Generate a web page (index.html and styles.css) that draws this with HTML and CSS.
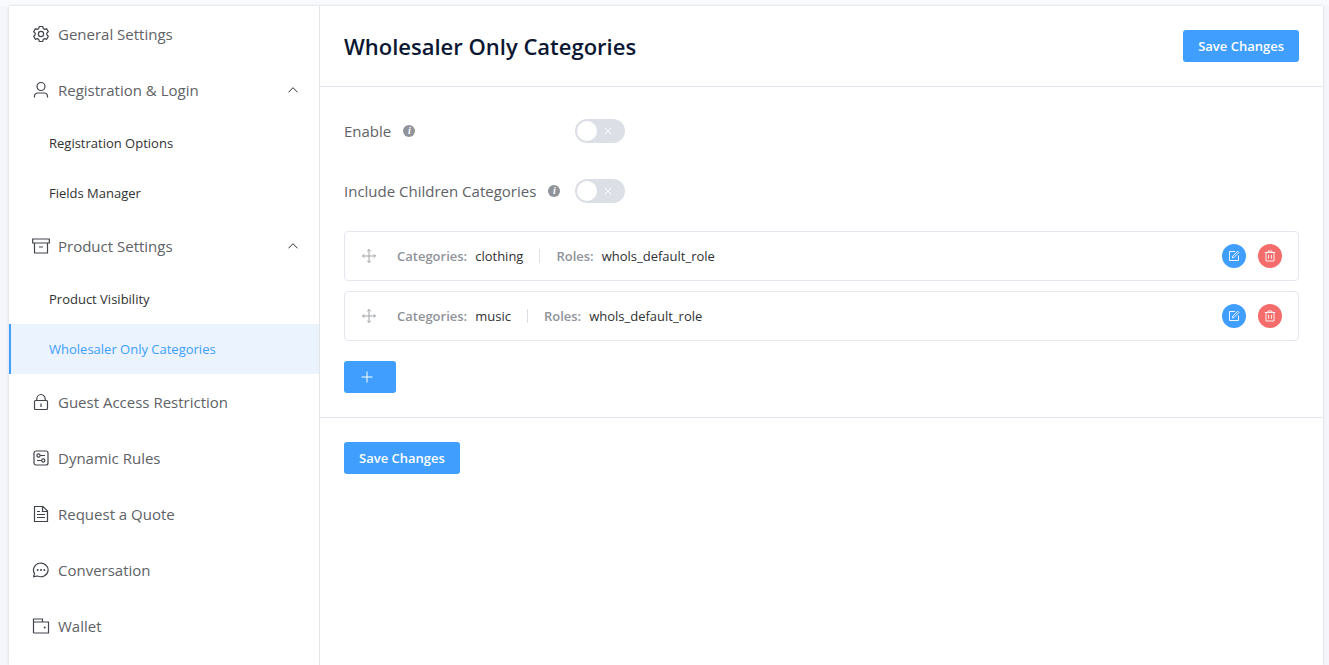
FILE: index.html
```
<!DOCTYPE html>
<html lang="en">
<head>
<meta charset="utf-8">
<title>Wholesaler Only Categories</title>
<meta name="viewport" content="width=device-width, initial-scale=1">
<link rel="stylesheet" href="styles.css">
</head>
<body>
<svg class="sprite" aria-hidden="true">
  <symbol id="i-gear" viewBox="0 0 18 18"><path d="M7.3 1.5h3.4l.6 2.1 1.2.7 2.1-.5 1.7 2.9-1.5 1.6v1.4l1.5 1.6-1.7 2.9-2.1-.5-1.2.7-.6 2.1H7.3l-.6-2.1-1.2-.7-2.1.5-1.7-2.9 1.5-1.6V8.300L1.700 6.700l1.700-2.900 2.100.5 1.200-.7z"/><circle cx="9" cy="9" r="2.600"/></symbol>
  <symbol id="i-user" viewBox="0 0 18 18"><circle cx="9" cy="5.500" r="4"/><path d="M2.500 16.500v-1.500a3 3 0 0 1 3-3h7a3 3 0 0 1 3 3v1.500"/></symbol>
  <symbol id="i-box" viewBox="0 0 18 18"><path d="M.7 2h16.600v4H.7zM2.500 6v10h13V6M7 10h4"/></symbol>
  <symbol id="i-lock" viewBox="0 0 18 18"><rect x="2.500" y="7.500" width="13" height="9" rx="1"/><path d="M4.800 7.500V6a4.200 4.500 0 0 1 8.400 0v1.500M9 10.500v3.500"/></symbol>
  <symbol id="i-rules" viewBox="0 0 18 18"><rect x="2" y="2" width="14" height="14" rx="2"/><circle cx="6.500" cy="6.500" r="1.600"/><path d="M8.100 6.500H13M5 11.500h4.500"/><circle cx="11.300" cy="11.500" r="1.600"/></symbol>
  <symbol id="i-doc" viewBox="0 0 18 18"><path d="M2.500 1.500h8.500l4.500 4.500v10.500h-13zM10.500 1.500V6.500h5M5 6.500h3M5 9.500h8M5 12.500h8"/></symbol>
  <symbol id="i-chat" viewBox="0 0 18 18"><path d="M1.700 15.700l.8-3.300A7.300 6.800 0 1 1 5.500 15z"/><path class="dots" d="M5.700 9h.01M9 9h.01M12.300 9h.01"/></symbol>
  <symbol id="i-wallet" viewBox="0 0 18 18"><path d="M1.500 16V2H10.500v3M1.500 5.000h15V16h-15"/><path class="dots" d="M12.700 10.500h.01"/></symbol>
  <symbol id="i-up" viewBox="0 0 12 12"><path d="M1.500 8.300 6 3.700l4.500 4.600"/></symbol>
  <symbol id="i-x" viewBox="0 0 12 12"><path d="M2.500 2.500l7 7M9.500 2.500l-7 7"/></symbol>
  <symbol id="i-plus" viewBox="0 0 14 14"><path d="M7 1.500v11M1.500 7h11"/></symbol>
  <symbol id="i-move" viewBox="0 0 16 16"><path d="M8 1.500v13M1.500 8h13M6.200 3.300 8 1.500l1.800 1.800M6.200 12.700 8 14.500l1.800-1.800M3.300 6.200 1.500 8l1.800 1.800M12.700 6.200 14.500 8l-1.800 1.800"/></symbol>
  <symbol id="i-edit" viewBox="0 0 12 12"><path d="M7 1.500H1.500v9h9V5.500"/><path d="M4.300 7.900l.3-1.600L9.600 1.200l1.300 1.300L5.900 7.500z"/></symbol>
  <symbol id="i-trash" viewBox="0 0 12 12"><path d="M.8 2.500h10.400M4 2.500V1h4v1.500M2 2.500v8.500h8V2.500M4.600 4.800v4M7.400 4.800v4"/></symbol>
</svg>

<div class="panel">
  <nav class="sidebar" aria-label="Settings">
    <ul class="menu">
      <li><a class="item" href="#general"><svg class="icon"><use href="#i-gear"/></svg>General Settings</a></li>
      <li>
        <button class="item" type="button" aria-expanded="true"><svg class="icon"><use href="#i-user"/></svg>Registration &amp; Login<svg class="arrow"><use href="#i-up"/></svg></button>
        <ul class="menu">
          <li><a class="sub" href="#options">Registration Options</a></li>
          <li><a class="sub" href="#fields">Fields Manager</a></li>
        </ul>
      </li>
      <li>
        <button class="item" type="button" aria-expanded="true"><svg class="icon"><use href="#i-box"/></svg>Product Settings<svg class="arrow"><use href="#i-up"/></svg></button>
        <ul class="menu">
          <li><a class="sub" href="#visibility">Product Visibility</a></li>
          <li><a class="sub active" href="#categories" aria-current="page">Wholesaler Only Categories</a></li>
        </ul>
      </li>
      <li><a class="item" href="#guest"><svg class="icon"><use href="#i-lock"/></svg>Guest Access Restriction</a></li>
      <li><a class="item" href="#rules"><svg class="icon"><use href="#i-rules"/></svg>Dynamic Rules</a></li>
      <li><a class="item" href="#quote"><svg class="icon"><use href="#i-doc"/></svg>Request a Quote</a></li>
      <li><a class="item" href="#conversation"><svg class="icon"><use href="#i-chat"/></svg>Conversation</a></li>
      <li><a class="item" href="#wallet"><svg class="icon"><use href="#i-wallet"/></svg>Wallet</a></li>
    </ul>
  </nav>

  <main class="content">
    <header class="head">
      <h1 class="title">Wholesaler Only Categories</h1>
      <button class="btn" type="button">Save Changes</button>
    </header>

    <div class="body">
      <div class="field">
        <span class="field-label"><label for="enable">Enable</label><span class="info" aria-hidden="true">i</span></span>
        <span class="switch"><input class="switch-input" id="enable" type="checkbox" role="switch"><svg class="switch-x"><use href="#i-x"/></svg></span>
      </div>
      <div class="field">
        <span class="field-label"><label for="children">Include Children Categories</label><span class="info" aria-hidden="true">i</span></span>
        <span class="switch"><input class="switch-input" id="children" type="checkbox" role="switch"><svg class="switch-x"><use href="#i-x"/></svg></span>
      </div>

      <ul class="rules">
        <li class="rule">
          <svg class="move"><use href="#i-move"/></svg>
          <span class="pair"><span class="key">Categories:</span><span>clothing</span></span>
          <span class="divider"></span>
          <span class="pair"><span class="key">Roles:</span><span>whols_default_role</span></span>
          <span class="actions">
            <button class="round edit" type="button" aria-label="Edit"><svg class="glyph"><use href="#i-edit"/></svg></button>
            <button class="round delete" type="button" aria-label="Delete"><svg class="glyph"><use href="#i-trash"/></svg></button>
          </span>
        </li>
        <li class="rule">
          <svg class="move"><use href="#i-move"/></svg>
          <span class="pair"><span class="key">Categories:</span><span>music</span></span>
          <span class="divider"></span>
          <span class="pair"><span class="key">Roles:</span><span>whols_default_role</span></span>
          <span class="actions">
            <button class="round edit" type="button" aria-label="Edit"><svg class="glyph"><use href="#i-edit"/></svg></button>
            <button class="round delete" type="button" aria-label="Delete"><svg class="glyph"><use href="#i-trash"/></svg></button>
          </span>
        </li>
      </ul>
      <button class="btn add" type="button" aria-label="Add rule"><svg class="plus"><use href="#i-plus"/></svg></button>
    </div>

    <footer class="foot">
      <button class="btn" type="button">Save Changes</button>
    </footer>
  </main>
</div>
</body>
</html>
```
FILE: styles.css
```
* {
  box-sizing: border-box;
}

body {
  margin: 0;
  padding: 6px 6px 0 9px;
  min-height: 100vh;
  display: flex;
  background: linear-gradient(#f9fafd 6px, #f4f6fb 6px);
  color: #303133;
  font: 14px/20px "Segoe UI", "Open Sans", "Noto Sans", sans-serif;
}

button {
  font: inherit;
  border: 0;
  cursor: pointer;
}

svg {
  flex: none;
  fill: none;
  stroke: currentColor;
}

.sprite {
  position: absolute;
  width: 0;
  height: 0;
}

.panel {
  flex: 1;
  display: flex;
  background: #fff;
  box-shadow: 0 0 3px rgba(0, 0, 0, 0.14);
}

.sidebar {
  flex: none;
  width: 311px;
  border-right: 1px solid #e4e5e9;
}

.menu {
  margin: 0;
  padding: 0;
  list-style: none;
}

.item {
  display: flex;
  align-items: center;
  gap: 8px;
  width: 100%;
  height: 56px;
  padding: 0 20px 0 23px;
  background: none;
  color: #606266;
  font-size: 15px;
  text-align: left;
  text-decoration: none;
}

.icon {
  width: 18px;
  height: 18px;
  color: #43454d;
  stroke-width: 1.2;
}

.dots {
  stroke-width: 2;
  stroke-linecap: round;
}

.arrow {
  width: 12px;
  height: 12px;
  margin-left: auto;
  color: #303133;
}

.sub {
  display: flex;
  align-items: center;
  height: 50px;
  padding-left: 38px;
  border-left: 2px solid transparent;
  color: #303133;
  font-size: 13px;
  text-decoration: none;
}

.active {
  border-left-color: #409eff;
  background: #ebf3ff;
  color: #409eff;
}

.content {
  flex: 1;
  min-width: 0;
}

.head {
  display: flex;
  align-items: center;
  justify-content: space-between;
  padding: 24px;
  border-bottom: 1px solid #e4e7ed;
}

.title {
  margin: 0;
  color: #0b1733;
  font-size: 22px;
  font-weight: 600;
  line-height: 32px;
}

.btn {
  height: 32px;
  padding: 0 15px;
  border-radius: 3px;
  background: #409eff;
  color: #fff;
  font-size: 13px;
  font-weight: 600;
}

.body {
  padding: 32px 24px 24px;
}

.field {
  display: flex;
  align-items: center;
  height: 24px;
  margin-bottom: 36px;
}

.field-label {
  display: flex;
  align-items: center;
  gap: 12px;
  width: 231px;
  color: #606266;
  font-size: 15px;
}

.info {
  width: 12px;
  height: 12px;
  border-radius: 50%;
  background: #909399;
  color: #fff;
  font: italic bold 10px/12px "Liberation Serif", serif;
  text-align: center;
}

.switch {
  display: grid;
  align-items: center;
}

.switch-input {
  appearance: none;
  grid-area: 1 / 1;
  display: flex;
  align-items: center;
  width: 50px;
  height: 24px;
  margin: 0;
  padding: 0 2px;
  border-radius: 12px;
  background: #dcdfe6;
}

.switch-input::before {
  content: "";
  width: 20px;
  height: 20px;
  border-radius: 50%;
  background: #fff;
}

.switch-x {
  grid-area: 1 / 1;
  width: 12px;
  height: 12px;
  margin-left: 27px;
  color: #fff;
  pointer-events: none;
}

.rules {
  display: grid;
  gap: 10px;
  margin: -8px 0 20px;
  padding: 0;
  list-style: none;
}

.rule {
  display: flex;
  align-items: center;
  height: 50px;
  padding: 0 16px;
  border: 1px solid #e4e7ed;
  border-radius: 4px;
  font-size: 13px;
}

.move {
  width: 16px;
  height: 16px;
  margin-right: 20px;
  color: #a0a2a6;
}

.pair {
  display: flex;
  gap: 8px;
}

.key {
  color: #909399;
  font-weight: 600;
}

.divider {
  width: 1px;
  height: 14px;
  margin: 0 16px;
  background: #dcdfe6;
}

.actions {
  display: flex;
  gap: 12px;
  margin-left: auto;
}

.round {
  display: grid;
  place-items: center;
  width: 24px;
  height: 24px;
  padding: 0;
  border-radius: 50%;
  color: #fff;
}

.edit {
  background: #409eff;
}

.delete {
  background: #f56c6c;
}

.glyph {
  width: 12px;
  height: 12px;
  stroke-width: 0.9;
}

.add {
  display: flex;
  align-items: center;
  width: 52px;
  padding: 0 16px;
}

.plus {
  width: 14px;
  height: 14px;
}

.foot {
  padding: 24px;
  border-top: 1px solid #e4e7ed;
}
```
